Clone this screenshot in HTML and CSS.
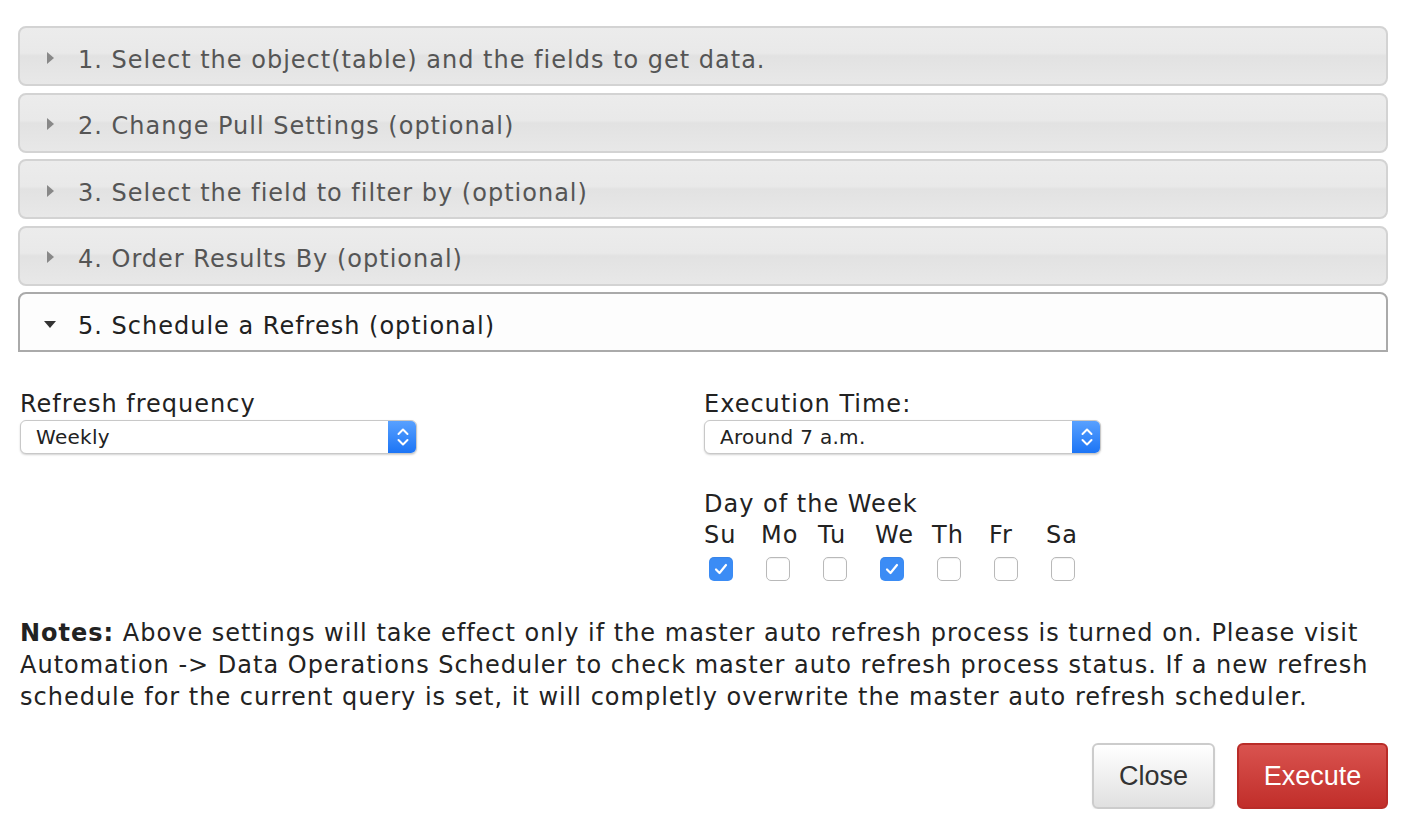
FILE: index.html
```html
<!DOCTYPE html>
<html>
<head>
<meta charset="utf-8">
<link rel="stylesheet" href="styles.css">
</head>
<body>
<div class="page">
  <div class="accordion">
    <div class="acc-header"><span class="tri tri-right"></span><span>1. Select the object(table) and the fields to get data.</span></div>
    <div class="acc-header"><span class="tri tri-right"></span><span>2. Change Pull Settings (optional)</span></div>
    <div class="acc-header"><span class="tri tri-right"></span><span>3. Select the field to filter by (optional)</span></div>
    <div class="acc-header"><span class="tri tri-right"></span><span>4. Order Results By (optional)</span></div>
    <div class="acc-header active"><span class="tri tri-down"></span><span>5. Schedule a Refresh (optional)</span></div>
  </div>

  <div class="content">
    <div class="row">
      <div class="col">
        <div class="label">Refresh frequency</div>
        <div class="select"><span class="select-text">Weekly</span><span class="stepper"><svg width="14" height="22" viewBox="0 0 14 22"><path d="M2.5 8 L7 3.5 L11.5 8" fill="none" stroke="#fff" stroke-width="2" stroke-linecap="round" stroke-linejoin="round"/><path d="M2.5 14 L7 18.5 L11.5 14" fill="none" stroke="#fff" stroke-width="2" stroke-linecap="round" stroke-linejoin="round"/></svg></span></div>
      </div>
      <div class="col">
        <div class="label">Execution Time:</div>
        <div class="select"><span class="select-text">Around 7 a.m.</span><span class="stepper"><svg width="14" height="22" viewBox="0 0 14 22"><path d="M2.5 8 L7 3.5 L11.5 8" fill="none" stroke="#fff" stroke-width="2" stroke-linecap="round" stroke-linejoin="round"/><path d="M2.5 14 L7 18.5 L11.5 14" fill="none" stroke="#fff" stroke-width="2" stroke-linecap="round" stroke-linejoin="round"/></svg></span></div>
        <div class="label dow-title">Day of the Week</div>
        <div class="days">
          <div class="day"><span>Su</span><span class="cb checked"><svg width="14" height="12" viewBox="0 0 14 12"><path d="M2 6.5 L5.5 10 L12 2" fill="none" stroke="#fff" stroke-width="2.2" stroke-linecap="round" stroke-linejoin="round"/></svg></span></div>
          <div class="day"><span>Mo</span><span class="cb"></span></div>
          <div class="day"><span>Tu</span><span class="cb"></span></div>
          <div class="day"><span>We</span><span class="cb checked"><svg width="14" height="12" viewBox="0 0 14 12"><path d="M2 6.5 L5.5 10 L12 2" fill="none" stroke="#fff" stroke-width="2.2" stroke-linecap="round" stroke-linejoin="round"/></svg></span></div>
          <div class="day"><span>Th</span><span class="cb"></span></div>
          <div class="day"><span>Fr</span><span class="cb"></span></div>
          <div class="day"><span>Sa</span><span class="cb"></span></div>
        </div>
      </div>
    </div>
    <p class="notes"><b>Notes:</b> Above settings will take effect only if the master auto refresh process is turned on. Please visit Automation -&gt; Data Operations Scheduler to check master auto refresh process status. If a new refresh schedule for the current query is set, it will completly overwrite the master auto refresh scheduler.</p>
  </div>

  <div class="buttons">
    <button class="btn btn-default">Close</button>
    <button class="btn btn-danger">Execute</button>
  </div>
</div>
</body>
</html>
```

FILE: styles.css
```css
html, body {
  margin: 0;
  padding: 0;
  background: #fff;
}
body {
  font-family: "DejaVu Sans", Verdana, sans-serif;
  color: #222;
  letter-spacing: 1px;
}
.page {
  width: 1370px;
  margin: 0 0 0 18px;
  padding-top: 26px;
}
.accordion {
  display: flex;
  flex-direction: column;
  gap: 6.5px;
}
.acc-header {
  box-sizing: border-box;
  height: 60px;
  border: 2px solid #d3d3d3;
  border-radius: 8px;
  background: linear-gradient(to bottom, #ececec 0%, #e9e9e9 45%, #e2e2e2 50%, #e8e8e8 100%);
  color: #555;
  font-size: 24px;
  display: flex;
  align-items: center;
  padding-left: 26px;
  padding-top: 7px;
}
.acc-header.active {
  background: #fdfdfd;
  border-color: #aaa;
  border-radius: 8px 8px 0 0;
  color: #212121;
}
.tri {
  display: inline-block;
  width: 0;
  height: 0;
  margin-right: 24px;
}
.tri-right {
  border-top: 6px solid transparent;
  border-bottom: 6px solid transparent;
  border-left: 7px solid #888;
  margin-left: 1px;
  margin-top: -4px;
}
.tri-down {
  border-left: 6px solid transparent;
  border-right: 6px solid transparent;
  border-top: 7px solid #333;
  margin-left: -2px;
  margin-right: 22px;
  margin-top: -3px;
}
.content {
  padding: 37px 0 0 2px;
}
.row {
  display: grid;
  grid-template-columns: 684px 1fr;
}
.label {
  font-size: 24px;
  line-height: 30px;
  color: #222;
}
.select {
  margin-top: 1px;
  width: 397px;
  height: 34px;
  box-sizing: border-box;
  border: 1px solid #c8c8c8;
  border-radius: 6px;
  box-shadow: 0 1px 2px rgba(0,0,0,0.18);
  display: flex;
  align-items: center;
  justify-content: space-between;
  overflow: hidden;
  background: #fff;
}
.select-text {
  font-size: 20px;
  padding-left: 15px;
  color: #222;
  letter-spacing: 0.3px;
}
.stepper {
  width: 29px;
  height: 34px;
  margin-right: -1px;
  background: linear-gradient(to bottom, #5aa2ff, #1a73f5);
  display: flex;
  align-items: center;
  justify-content: center;
}
.dow-title {
  margin-top: 35px;
}
.days {
  display: grid;
  grid-template-columns: repeat(7, 57px);
}
.day {
  display: flex;
  flex-direction: column;
  align-items: flex-start;
  font-size: 24px;
  line-height: 32px;
}
.cb {
  margin: 6px 0 0 5px;
  width: 24px;
  height: 24px;
  box-sizing: border-box;
  border: 1.5px solid #b9b9b9;
  border-radius: 5px;
  background: #fff;
  box-shadow: inset 0 1px 1px rgba(0,0,0,0.06);
  display: flex;
  align-items: center;
  justify-content: center;
}
.cb.checked {
  border: none;
  background: #3b8cf5;
}
.notes {
  margin: 36px 0 0 0;
  font-size: 24px;
  line-height: 32px;
  color: #222;
}
.buttons {
  display: flex;
  justify-content: flex-end;
  gap: 22px;
  margin-top: 30px;
}
.btn {
  height: 66px;
  font-family: "Liberation Sans", Arial, sans-serif;
  font-size: 27px;
  letter-spacing: 0;
  border-radius: 6px;
  padding: 0 20px;
  cursor: pointer;
}
.btn-default {
  width: 123px;
  color: #333;
  border: 2px solid #ccc;
  background: linear-gradient(to bottom, #fff, #e0e0e0);
  box-shadow: 0 1px 2px rgba(0,0,0,0.08);
}
.btn-danger {
  width: 151px;
  color: #fff;
  border: 2px solid #b92c28;
  background: linear-gradient(to bottom, #d9534f, #c12e2a);
}
```
